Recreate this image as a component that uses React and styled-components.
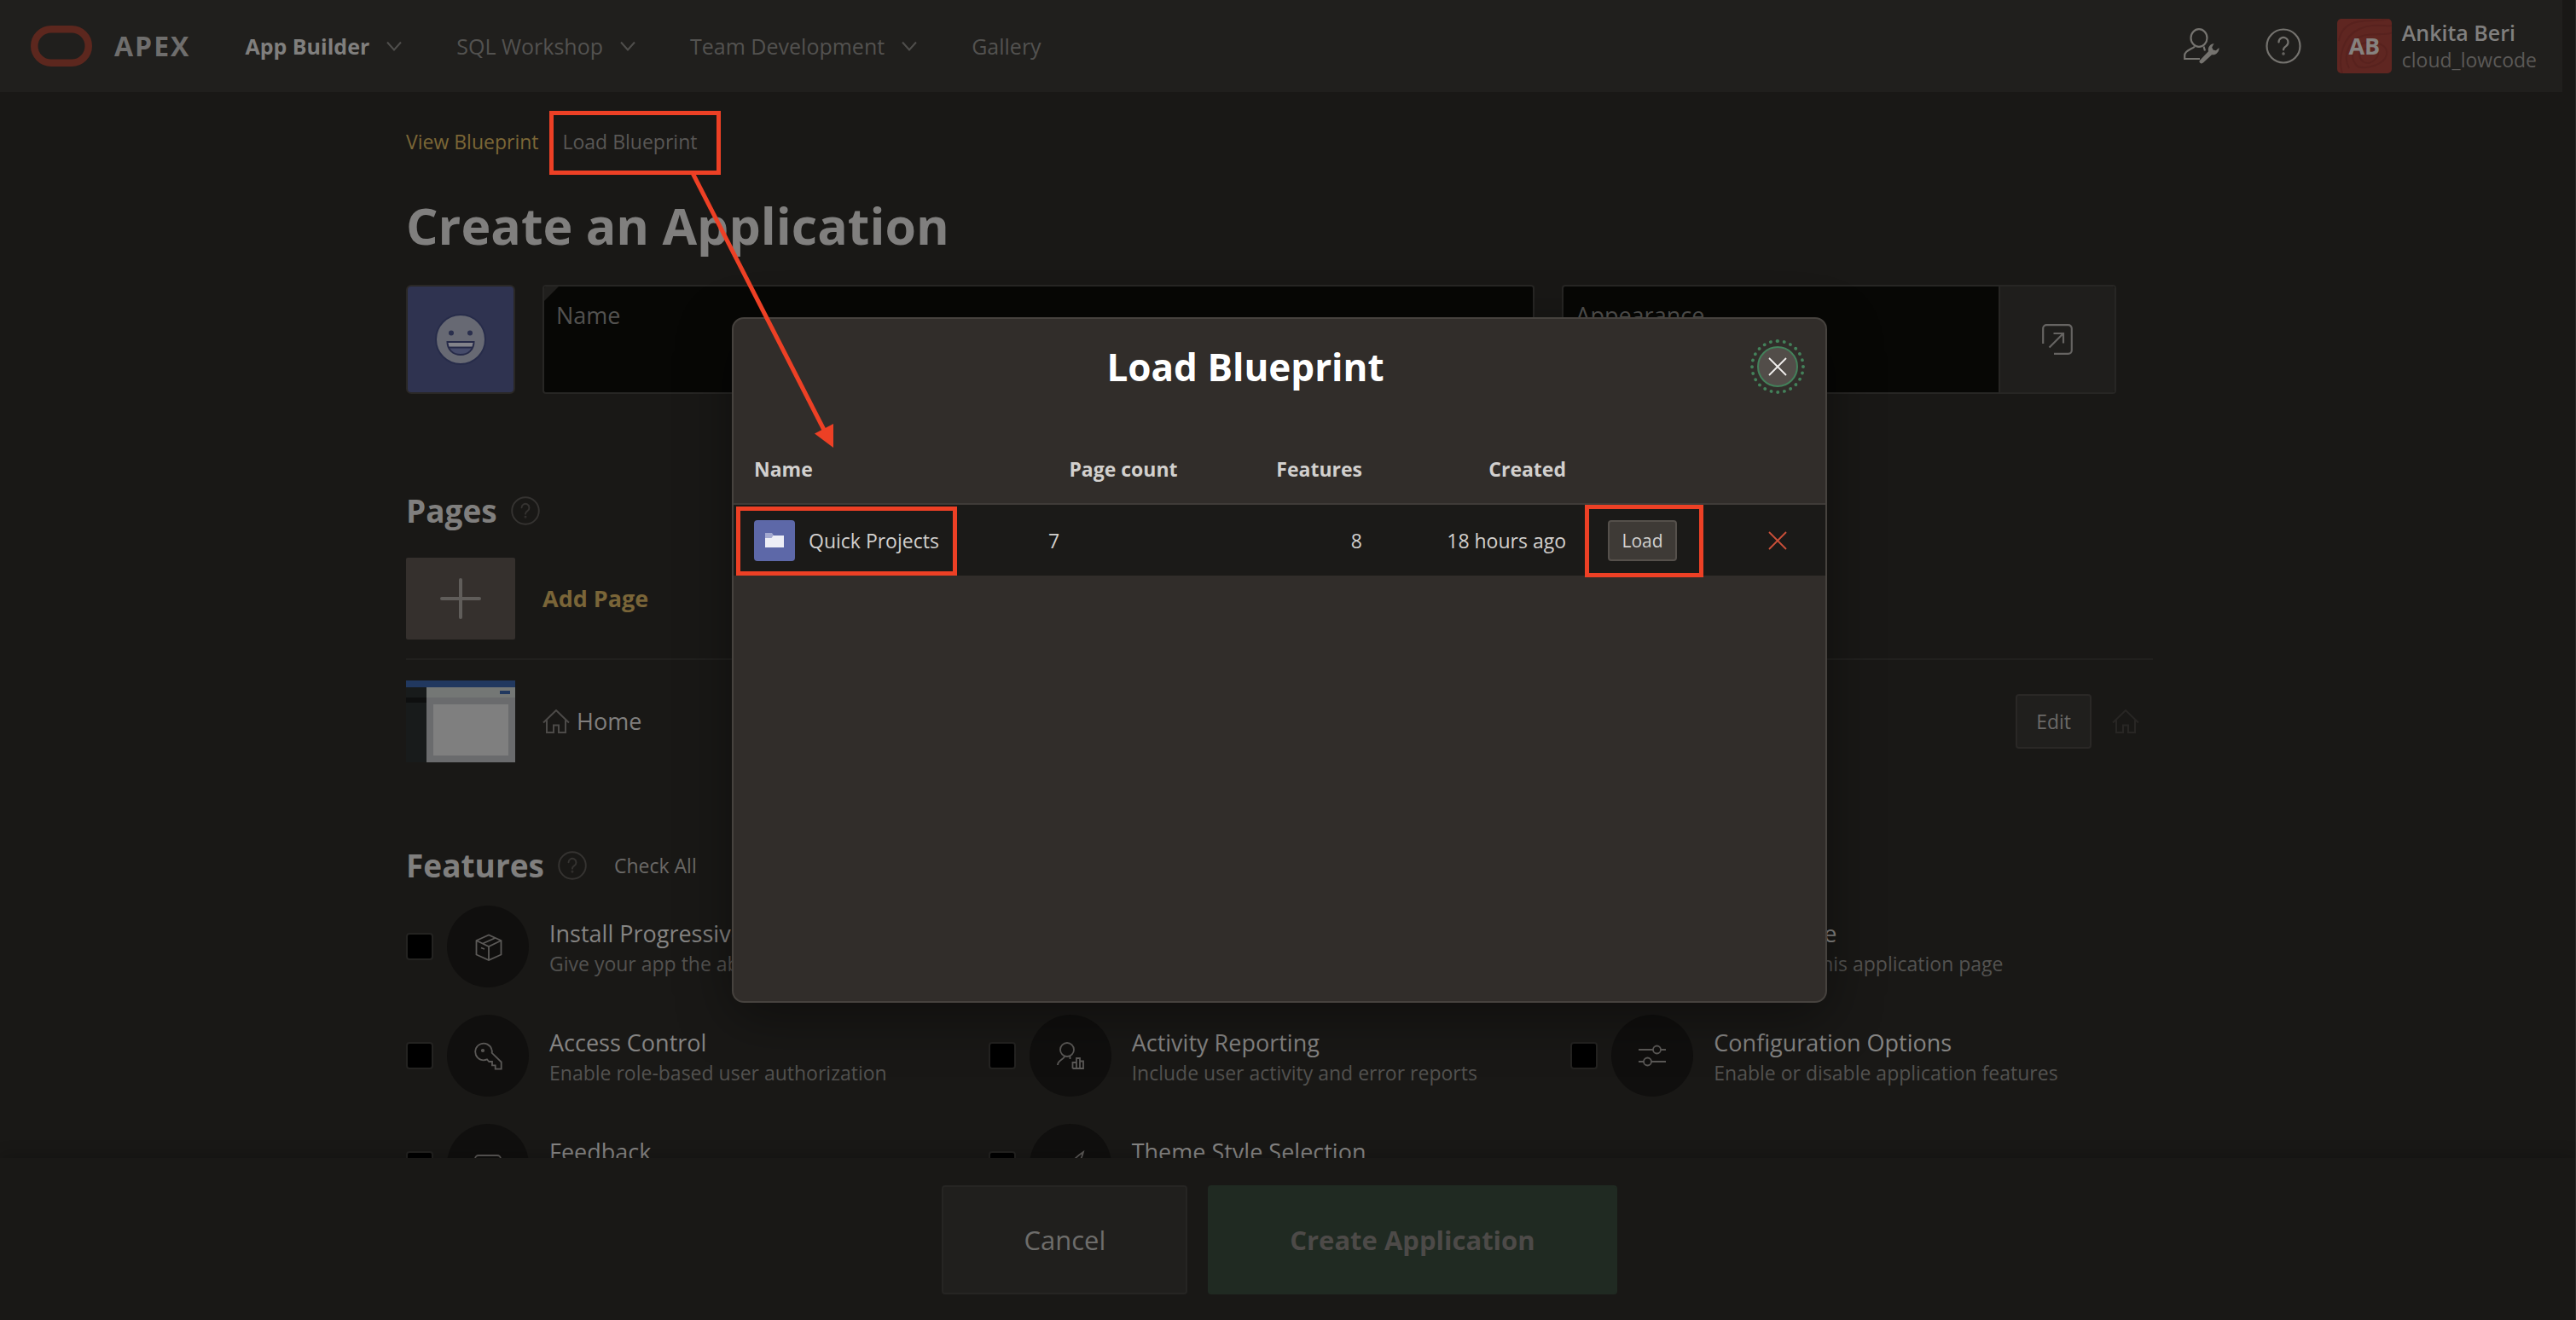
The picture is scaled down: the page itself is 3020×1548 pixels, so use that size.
import React from 'react';
import styled, { createGlobalStyle } from 'styled-components';

const GlobalStyle = createGlobalStyle`
  *, *::before, *::after { box-sizing: border-box; }
  html, body { margin: 0; background: #191816; }
  body { font-family: "Open Sans", "Noto Sans", sans-serif; font-size: 23px; line-height: 32px; color: #807f7e; }
  button, input { font: inherit; color: inherit; margin: 0; }
  a { color: inherit; text-decoration: none; }
  svg { display: block; flex: none; fill: none; }
  svg:not([stroke]) { stroke: currentColor; }
`;

/* ---------- page frame ---------- */
const Page = styled.div`
  position: relative;
  display: flex;
  flex-direction: column;
  height: 100vh;
  overflow: hidden;
  border-right: 1px solid #2a2927;
`;

const Header = styled.header`
  display: flex;
  align-items: center;
  justify-content: space-between;
  flex: none;
  height: 108px;
  margin-right: 15px;
  padding: 0 30px 0 36px;
  background: #201f1d;
`;

const Cluster = styled.div`
  display: flex;
  align-items: center;
  gap: ${(p) => p.$gap}px;
`;

const LogoMark = styled.svg`
  color: #5c271e;
`;

const Brand = styled.a`
  display: flex;
  align-items: center;
  gap: 26px;
  font-size: 32px;
  font-weight: 700;
  letter-spacing: 2px;
  color: #6f6e6d;
`;

const Nav = styled.nav`
  display: flex;
  gap: 64px;
`;

const NavLink = styled.a`
  display: flex;
  align-items: center;
  gap: 20px;
  font-size: 25px;
  font-weight: ${(p) => (p.$active ? 700 : 400)};
  color: ${(p) => (p.$active ? '#807f7e' : '#535250')};
  svg { color: #4f4e4c; }
`;

const IconButton = styled.button`
  padding: 0;
  border: 0;
  background: none;
  color: ${(p) => p.$tone || '#75736f'};
  cursor: pointer;
`;

const Account = styled.div`
  display: flex;
  gap: 12px;
`;

const Avatar = styled.span`
  position: relative;
  display: grid;
  place-items: center;
  width: 64px;
  height: 64px;
  border-radius: 5px;
  overflow: hidden;
  background: #5f2621;
  color: #86827f;
  font-size: 27px;
  font-weight: 700;
  svg { position: absolute; inset: 0; }
  span { position: relative; }
`;

const AccountText = styled.span`
  display: flex;
  flex-direction: column;
  color: #5b5957;
  strong { font-size: 25px; font-weight: 600; color: #807f7e; }
`;

/* ---------- wizard body ---------- */
const Main = styled.main`
  flex: 1;
  min-height: 0;
  overflow: hidden;
  padding: 42px 19px 0 0;
`;

const Content = styled.div`
  width: 100%;
  max-width: 2048px;
  margin: 0 auto;
`;

const Crumbs = styled.nav`
  display: flex;
  gap: 28px;
  color: #555351;
`;

const Crumb = styled.a`
  color: ${(p) => (p.$current ? '#595755' : '#7c6736')};
`;

const Title = styled.h1`
  margin: 42px 0 30px;
  font-size: 59px;
  line-height: 80px;
  font-weight: 700;
`;

const FormRow = styled.form`
  display: grid;
  grid-template-columns: 128px minmax(0, 1164fr) minmax(0, 650fr);
  gap: 32px;
  padding-right: 43px;
`;

const AppIcon = styled.button`
  display: grid;
  place-items: center;
  height: 128px;
  padding: 0;
  border: 2px solid #2a2826;
  border-radius: 6px;
  background: #2f3350;
`;

const Field = styled.div`
  position: relative;
  display: flex;
  height: 128px;
  border: 2px solid #272624;
  border-radius: 4px;
  overflow: hidden;
  background: #070705;
`;

const RequiredCorner = styled.span`
  position: absolute;
  top: 0;
  left: 0;
  border-top: 17px solid #201f1d;
  border-right: 17px solid transparent;
`;

const FieldBody = styled.div`
  flex: 1;
  display: flex;
  flex-direction: column;
  padding: 16px 14px;
  color: #535250;
  font-size: 27px;
  label { line-height: 36px; }
  input {
    width: 100%;
    height: 48px;
    padding: 0;
    border: 0;
    outline: 0;
    background: transparent;
  }
`;

const FieldAddon = styled.button`
  display: grid;
  place-items: center;
  width: 136px;
  padding: 0;
  border: 0;
  border-left: 2px solid #272624;
  background: #1f1e1c;
  color: #666462;
`;

const SectionHead = styled.div`
  display: flex;
  align-items: center;
  margin-top: ${(p) => p.$top}px;
  height: 48px;
  h2 { margin: 0 16px 0 0; font-size: 37px; line-height: 48px; font-weight: 700; }
`;

const TextButton = styled.button`
  margin-left: 32px;
  padding: 0;
  border: 0;
  background: none;
  color: #6b6967;
`;

const PageRow = styled.div`
  display: flex;
  align-items: center;
  gap: 32px;
  padding: ${(p) => (p.$first ? '31px 0 22px' : '24px 16px 0 0')};
  border-bottom: ${(p) => (p.$first ? '2px solid #21201e' : '0')};
`;

const AddTile = styled.button`
  display: grid;
  place-items: center;
  width: 128px;
  height: 96px;
  padding: 0;
  border: 0;
  border-radius: 2px;
  background: #35302d;
  color: #605d5a;
`;

const AddLink = styled.a`
  font-size: 27px;
  font-weight: 700;
  color: #7a6538;
`;

const PageName = styled.span`
  display: flex;
  align-items: center;
  gap: 8px;
  flex: 1;
  font-size: 27px;
  svg { color: #4c4a48; }
`;

const Tail = styled.span`
  display: flex;
  align-items: center;
  gap: 24px;
  color: #282624;
`;

const EditButton = styled.button`
  height: 64px;
  padding: 0 22px;
  border: 2px solid #2a2826;
  border-radius: 4px;
  background: #201f1d;
  color: #6b6967;
`;

const FeatureGrid = styled.div`
  display: grid;
  grid-template-columns: repeat(3, minmax(0, 1fr));
  row-gap: 32px;
  padding-top: 23px;
`;

const Feature = styled.label`
  display: flex;
  align-items: center;
  height: 96px;
`;

const Check = styled.input`
  appearance: none;
  width: 32px;
  height: 32px;
  margin: 0 16px 0 0;
  border: 2px solid #242321;
  border-radius: 4px;
  background: #000;
`;

const FeatureIcon = styled.span`
  display: grid;
  place-items: center;
  width: 96px;
  height: 96px;
  margin-right: 24px;
  border-radius: 50%;
  background: #100f0e;
  color: #5b5957;
`;

const FeatureText = styled.span`
  display: flex;
  flex-direction: column;
  padding-top: 4px;
  line-height: 34px;
  white-space: nowrap;
  color: #535250;
  b { font-size: 27px; line-height: 36px; font-weight: 400; color: #858483; }
`;

const Footer = styled.footer`
  position: relative;
  display: flex;
  justify-content: center;
  gap: 24px;
  flex: none;
  padding: 32px 19px 30px 0;
  background: #191816;
  box-shadow: 0 -4px 16px rgba(0, 0, 0, 0.2);
`;

const WizardButton = styled.button`
  height: 128px;
  padding: 0 94px;
  border: 2px solid ${(p) => (p.$primary ? '#202a22' : '#262523')};
  border-radius: 4px;
  background: ${(p) => (p.$primary ? '#202a22' : '#201f1d')};
  color: ${(p) => (p.$primary ? '#4d4a48' : '#6e6d6b')};
  font-size: 31px;
  font-weight: ${(p) => (p.$primary ? 700 : 400)};
`;

/* ---------- dialog ---------- */
const Backdrop = styled.div`
  position: absolute;
  inset: 0;
  display: flex;
  align-items: center;
  justify-content: center;
  padding-right: 19px;
`;

const Dialog = styled.section`
  width: 100%;
  max-width: 1284px;
  min-height: 804px;
  border: 2px solid #46423e;
  border-radius: 14px;
  overflow: hidden;
  background: #312d2a;
  box-shadow: 0 16px 64px rgba(0, 0, 0, 0.4);
`;

const DialogBar = styled.div`
  display: flex;
  align-items: center;
  height: 112px;
  padding-right: 32px;
  h2 {
    flex: 1;
    margin: 0;
    text-align: center;
    font-size: 44px;
    line-height: 64px;
    font-weight: 700;
    color: #fff;
  }
`;

const CloseButton = styled.button`
  display: grid;
  place-items: center;
  width: 48px;
  height: 48px;
  padding: 0;
  border: 2px solid #43815a;
  border-radius: 50%;
  outline: 4px dotted #43815a;
  outline-offset: 4px;
  background: #524d49;
  color: #f1efed;
`;

const Table = styled.table`
  width: 100%;
  margin-top: 22px;
  table-layout: fixed;
  border-collapse: separate;
  border-spacing: 0;
  color: #d2d0ce;
  th, td { padding: 0 16px; text-align: left; font-weight: 400; }
  th { height: 84px; padding-top: 2px; border-bottom: 2px solid #3f3b38; font-weight: 700; }
  td { height: 83px; background: #1b1a18; }
  th:first-child, td:first-child { padding-left: 24px; }
`;

const Th = styled.th`
  &&& { text-align: ${(p) => p.$align}; }
`;

const Td = styled.td`
  &&& { text-align: ${(p) => p.$align}; }
`;

const LoadButton = styled.button`
  height: 48px;
  padding: 0 14px;
  border: 2px solid #55504b;
  border-radius: 4px;
  background: #3e3a36;
  color: #d2d0ce;
  font-size: 21px;
`;

const DeleteCell = styled.td`
  &&& { padding-right: 45px; }
  button { margin-left: auto; display: block; }
`;

const BlueprintName = styled.span`
  display: flex;
  align-items: center;
  gap: 16px;
`;

const BlueprintIcon = styled.span`
  display: grid;
  place-items: center;
  width: 48px;
  height: 48px;
  border-radius: 4px;
  background: #5d68a8;
`;

const Callouts = styled.svg`
  position: absolute;
  top: 0;
  left: 0;
  pointer-events: none;
`;

/* ---------- drawings ---------- */
const Chevron = () => (
  <svg width="18" height="12" viewBox="0 0 18 12" strokeWidth="2"><path d="M1 1.5 9 10.500 17 1.5" /></svg>
);

const HelpIcon = ({ size, weight }) => (
  <svg width={size} height={size} viewBox="0 0 42 42" strokeWidth={weight} strokeLinecap="round">
    <circle cx="21" cy="21" r="19.500" />
    <path d="M15.500 16.500a5.500 5.500 0 1 1 8.500 4.600c-2 1.300-3 2.300-3 4.400" />
    <circle cx="21" cy="30" r="0.600" />
  </svg>
);

const AdminIcon = () => (
  <svg width="42" height="42" viewBox="0 0 42 42" strokeWidth="2.200">
    <ellipse cx="18" cy="11.500" rx="9.500" ry="10.300" />
    <path d="M13 21.500C11 24.500 1.200 25.500 1.200 32v4H19M23.500 21.500 25 26.500" />
    <path
      d="M20 41.200c-1.600-.6-2-2.200-1-3.400l10-10.600c-.8-4.200 1.600-8.600 6.600-9.200l-2.400 4.600 1.400 3 3.200.6L41.500 23c.4 5-3.800 9-8.500 8.200l-10 9.400c-.8.8-2 1-3 .6Z"
      fill="currentColor"
      stroke="none"
    />
  </svg>
);

const HomeIcon = () => (
  <svg width="32" height="28" viewBox="0 0 32 28" strokeWidth="2">
    <path d="M1 15.500 16 1l15 14.500M5 12.500V27h8v-8.500h6V27h8V12.500" />
  </svg>
);

const Cross = () => (
  <svg width="22" height="22" viewBox="0 0 22 22" strokeWidth="1.800"><path d="M1 1 21 21M21 1 1 21" /></svg>
);

const PopupIcon = () => (
  <svg width="36" height="36" viewBox="0 0 36 36" strokeWidth="2.200">
    <path d="M1.200 23V5a4 4 0 0 1 4-3.800h25.600a4 4 0 0 1 4 4v25.600a4 4 0 0 1-4 4H14M8.500 27.500 25 11M13.500 11H25v11.500" />
  </svg>
);

const Smiley = () => (
  <svg width="60" height="60" viewBox="0 0 60 60" stroke="none">
    <circle cx="30" cy="30" r="29" fill="#676973" stroke="#272c4a" strokeWidth="2" />
    <circle cx="19" cy="22.500" r="3" fill="#2a2f4d" />
    <circle cx="41" cy="22.500" r="3" fill="#2a2f4d" />
    <path d="M14.500 33h31c0 9-6.500 15-15.500 15s-15.500-6-15.500-15Z" fill="#464b6a" stroke="#262a48" strokeWidth="2" />
    <path d="M15.500 34h29l-1.200 5H16.700Z" fill="#83838a" />
    <path d="M16 39.500h28" stroke="#262a48" strokeWidth="2" />
  </svg>
);

const PageThumb = () => (
  <svg width="128" height="96" viewBox="0 0 128 96" stroke="none">
    <rect width="128" height="96" fill="#181b1b" />
    <rect y="20" width="24" height="6" fill="#0e0f0f" />
    <rect x="24" y="8" width="104" height="12" fill="#747775" />
    <rect x="24" y="20" width="104" height="76" fill="#6a6b6d" />
    <rect x="32" y="28" width="88" height="60" fill="#7f7f7f" />
    <rect width="128" height="8" fill="#21385f" />
    <rect x="110" y="12" width="12" height="4" fill="#21385f" />
  </svg>
);

const glyphs = {
  box: <path d="M2.500 9 17 2.500 31.500 9v16.500L17 32 2.500 25.500ZM2.500 9 17 16 31.500 9M17 16v16M10 12.500 24.500 6M8 17.500l4 1.500" />,
  bell: <path d="M6 25V14a10 10 0 0 1 20 0v11M3 25h26M13 29h6" />,
  info: <path d="M6 2h20v28H6ZM11 10h10M11 16h10M11 22h6" />,
  key: (
    <>
      <path d="M15 20.400A9.800 9.800 0 1 1 20.300 8.500c.8 1.900.6 3.300.4 4.300L31.700 23.500v8.200h-7v-4.400H21V23h-3.700Z" />
      <circle cx="10" cy="10" r="1.200" />
    </>
  ),
  activity: <path d="M12 1a8 8 0 0 1 0 16 8 8 0 0 1 0-16ZM9 16.500c0 4-8 4.500-8 10.500M15.500 16.500V20M18.500 31V24H23v7M23 31V19h4v12M27 22.500h4V31H18.500" />,
  sliders: (
    <>
      <circle cx="21.500" cy="9" r="4.500" />
      <circle cx="10.500" cy="23" r="4.500" />
      <path d="M0 9h17M26 9h6M0 23h6M15 23h17" />
    </>
  ),
  comment: <path d="M5 5h22a4 4 0 0 1 4 4v13a4 4 0 0 1-4 4H15l-7 5v-5H5a4 4 0 0 1-4-4V9a4 4 0 0 1 4-4Z" />,
  brush: <path d="M31 1C25 5 18 11 14 18l4 4C25 17 29 9 31 1ZM14 18c-5 0-6 4-7 8l-5 4c7 2 15 0 16-8" />,
};

const FeatureGlyph = ({ name }) => (
  <svg width="32" height="32" viewBox="0 0 32 32" strokeWidth="1.800" overflow="visible">{glyphs[name]}</svg>
);

const FolderIcon = () => (
  <svg width="24" height="20" viewBox="0 0 24 20" stroke="none">
    <path d="M1 1h8l2 3-2 3H1Z" fill="#a3a9d0" />
    <path d="M1 7h7.500l2-3H23v14H1Z" fill="#edeef6" />
  </svg>
);

const navItems = ['App Builder', 'SQL Workshop', 'Team Development', 'Gallery'];

const features = [
  ['box', 'Install Progressive Web App', 'Give your app the ability to be installed'],
  ['bell', 'Push Notifications', 'Allow users to subscribe to notifications'],
  ['info', 'About Page', 'Add about this application page'],
  ['key', 'Access Control', 'Enable role-based user authorization'],
  ['activity', 'Activity Reporting', 'Include user activity and error reports'],
  ['sliders', 'Configuration Options', 'Enable or disable application features'],
  ['comment', 'Feedback', 'Allow users to provide feedback'],
  ['brush', 'Theme Style Selection', 'Update default application look and feel'],
];

export default function App() {
  return (
    <Page>
      <GlobalStyle />
      <Header>
        <Cluster $gap={64}>
          <Brand href="#home">
            <LogoMark width="72" height="48" viewBox="0 0 72 48" strokeWidth="8.500">
              <rect x="4.250" y="4.250" width="63.500" height="39.500" rx="19.750" />
            </LogoMark>
            APEX
          </Brand>
          <Nav>
            {navItems.map((item, i) => (
              <NavLink key={item} href="#nav" $active={i === 0}>
                {item}
                {i < 3 && <Chevron />}
              </NavLink>
            ))}
          </Nav>
        </Cluster>
        <Cluster $gap={42}>
          <Cluster $gap={54}>
            <IconButton aria-label="Administration"><AdminIcon /></IconButton>
            <IconButton aria-label="Help"><HelpIcon size={42} weight={2.2} /></IconButton>
          </Cluster>
          <Account>
            <Avatar>
              <svg width="64" height="64" viewBox="0 0 64 64" stroke="#58221e" strokeWidth="2">
                <path d="M2 26C4 12 14 4 28 3s24-1 34-3M6 64C0 44 8 20 26 12s30-2 38-4M14 58C6 44 14 24 30 20s30 0 34-4M24 56C12 44 20 30 34 28s26 4 24 14-20 18-34 14M30 50c-8-8-2-16 8-15s12 6 8 11-10 8-16 4" />
              </svg>
              <span>AB</span>
            </Avatar>
            <AccountText><strong>Ankita Beri</strong>cloud_lowcode</AccountText>
          </Account>
        </Cluster>
      </Header>

      <Main>
        <Content>
          <Crumbs>
            <Crumb href="#view">View Blueprint</Crumb>
            <Crumb href="#load" $current>Load Blueprint</Crumb>
          </Crumbs>
          <Title>Create an Application</Title>
          <FormRow>
            <AppIcon type="button" aria-label="Application icon"><Smiley /></AppIcon>
            <Field>
              <RequiredCorner />
              <FieldBody>
                <label htmlFor="app-name">Name</label>
                <input id="app-name" required />
              </FieldBody>
            </Field>
            <Field>
              <FieldBody>
                <label htmlFor="appearance">Appearance</label>
                <input id="appearance" readOnly />
              </FieldBody>
              <FieldAddon type="button" aria-label="Set appearance"><PopupIcon /></FieldAddon>
            </Field>
          </FormRow>

          <SectionHead $top={113}>
            <h2>Pages</h2>
            <IconButton aria-label="Help on pages" $tone="#353331"><HelpIcon size={34} weight={2.4} /></IconButton>
          </SectionHead>
          <PageRow $first>
            <AddTile aria-label="Add page">
              <svg width="48" height="48" viewBox="0 0 48 48" strokeWidth="4" strokeLinecap="round"><path d="M24 2v44M2 24h44" /></svg>
            </AddTile>
            <AddLink href="#add">Add Page</AddLink>
          </PageRow>
          <PageRow>
            <PageThumb />
            <PageName><HomeIcon />Home</PageName>
            <Tail>
              <EditButton>Edit</EditButton>
              <HomeIcon />
            </Tail>
          </PageRow>

          <SectionHead $top={97}>
            <h2>Features</h2>
            <IconButton aria-label="Help on features" $tone="#353331"><HelpIcon size={34} weight={2.4} /></IconButton>
            <TextButton>Check All</TextButton>
          </SectionHead>
          <FeatureGrid>
            {features.map(([icon, title, text]) => (
              <Feature key={title}>
                <Check type="checkbox" />
                <FeatureIcon><FeatureGlyph name={icon} /></FeatureIcon>
                <FeatureText><b>{title}</b>{text}</FeatureText>
              </Feature>
            ))}
          </FeatureGrid>
        </Content>
      </Main>

      <Footer>
        <WizardButton>Cancel</WizardButton>
        <WizardButton $primary>Create Application</WizardButton>
      </Footer>

      <Backdrop>
        <Dialog role="dialog" aria-labelledby="dialog-title">
          <DialogBar>
            <h2 id="dialog-title">Load Blueprint</h2>
            <CloseButton aria-label="Close"><Cross /></CloseButton>
          </DialogBar>
          <Table>
            <colgroup>
              <col />
              <col width="208" />
              <col width="192" />
              <col width="239" />
              <col width="147" />
              <col width="141" />
            </colgroup>
            <thead>
              <tr>
                <Th $align="left">Name</Th>
                <Th $align="center">Page count</Th>
                <Th $align="right">Features</Th>
                <Th $align="right">Created</Th>
                <Th $align="left" aria-label="Load" />
                <Th $align="left" aria-label="Delete" />
              </tr>
            </thead>
            <tbody>
              <tr>
                <Td $align="left">
                  <BlueprintName><BlueprintIcon><FolderIcon /></BlueprintIcon>Quick Projects</BlueprintName>
                </Td>
                <Td $align="left">7</Td>
                <Td $align="right">8</Td>
                <Td $align="right">18 hours ago</Td>
                <Td $align="center"><LoadButton>Load</LoadButton></Td>
                <DeleteCell><IconButton aria-label="Delete blueprint" $tone="#cb5039"><Cross /></IconButton></DeleteCell>
              </tr>
            </tbody>
          </Table>
        </Dialog>
      </Backdrop>

      <Callouts width="2200" height="800" viewBox="0 0 2200 800" stroke="#ed4025" strokeWidth="5">
        <rect x="646.500" y="132.500" width="196" height="70" />
        <rect x="865.500" y="596.500" width="254" height="76" />
        <rect x="1860.500" y="594.500" width="134" height="80" />
        <path d="M812 203 967 506" />
        <path d="M955 508.500 977 497v28Z" fill="#ed4025" stroke="none" />
      </Callouts>
    </Page>
  );
}
